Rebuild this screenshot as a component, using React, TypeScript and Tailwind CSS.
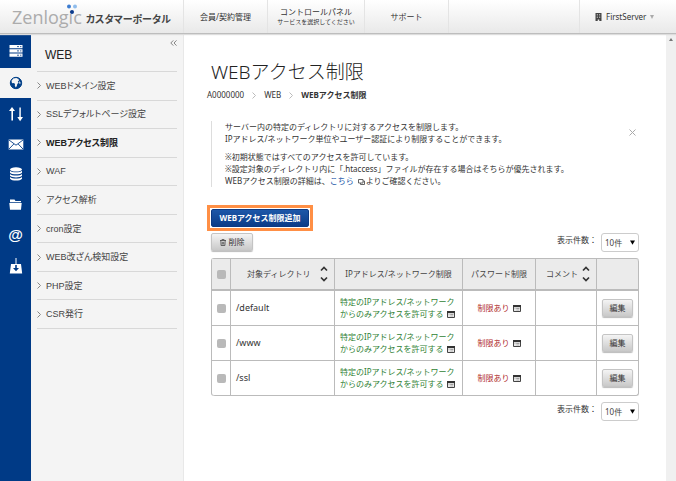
import React from "react";

const menu = [
  "WEBドメイン設定",
  "SSLデフォルトページ設定",
  "WEBアクセス制限",
  "WAF",
  "アクセス解析",
  "cron設定",
  "WEB改ざん検知設定",
  "PHP設定",
  "CSR発行",
];

const rows = ["/default", "/www", "/ssl"];

function Logo() {
  return (
    <span className="relative font-['Open_Sans','Noto_Sans',sans-serif] text-[18px] leading-6 text-[#acacac]">
      Zenlogic
      <svg className="absolute -top-px right-1 h-4 w-3" viewBox="0 0 12 16" aria-hidden="true">
        <circle cx="3" cy="2.5" r="2" fill="#3c7cd0" />
        <circle cx="9" cy="2.5" r="2" fill="#8fbcec" />
        <circle cx="6" cy="8" r="2" fill="#0a3a8c" />
      </svg>
    </span>
  );
}

function ServerIcon() {
  return (
    <svg width="14" height="12" viewBox="0 0 14 12" aria-hidden="true">
      <path fill="#fff" d="M.5 0h13v3.2H.5zM.5 4.3h13v3.2H.5zM.5 8.6h13v3.2H.5z" />
      <path stroke="#003a86" strokeWidth=".8" d="M8 1.6h2M11 1.6h1.4M8 5.9h2M11 5.9h1.4M8 10.2h2M11 10.2h1.4" />
    </svg>
  );
}

function GlobeIcon() {
  return (
    <svg width="14" height="14" viewBox="0 0 14 14" aria-hidden="true">
      <circle cx="7" cy="7" r="5.7" fill="#003f88" stroke="#003f88" strokeWidth="1" />
      <path fill="#f4f4f4" d="M2.500 4.800l1.800-2.200 3-.6 2.200.9.500 1.600-1.200 1 .8 1.200-1.300 1.200-.5 2.200-1 1.400-1-1.800.2-1.900-1.700-.9-1.300.3zM10.300 5l1.200 1.500-.3 1.700-1-.9z" />
    </svg>
  );
}

function ArrowsIcon() {
  return (
    <svg width="16" height="16" viewBox="0 0 16 16" aria-hidden="true">
      <path fill="#fff" d="M4 1L7 5H5v9.5H3.4V5H1zM11.4 1.5H12.8V11H15l-2.9 4.2L9.3 11h2z" />
    </svg>
  );
}

function MailIcon() {
  return (
    <svg width="16" height="11" viewBox="0 0 16 11" aria-hidden="true">
      <path fill="#fff" d="M.7.5h14.6v10H.7z" />
      <path fill="none" stroke="#003a86" strokeWidth=".9" d="M1 1l7 5.2L15 1M1 10l4.8-5M15 10l-4.8-5" />
    </svg>
  );
}

function DatabaseIcon() {
  return (
    <svg width="14" height="14" viewBox="0 0 14 14" aria-hidden="true">
      <ellipse cx="7" cy="2.4" rx="6" ry="2.1" fill="#fff" />
      <path fill="#fff" d="M1 3.8c2 2 10 2 12 0v1.9c-1.8 2.2-10.200 2.200-12 0zM1 6.900c2 2 10 2 12 0v1.900c-1.800 2.200-10.200 2.200-12 0zM1 10c2 2 10 2 12 0v1.700c-1.800 2.500-10.200 2.500-12 0z" />
    </svg>
  );
}

function FolderIcon() {
  return (
    <svg width="13" height="11" viewBox="0 0 13 11" aria-hidden="true">
      <path fill="#fff" d="M1 .6h4.500l1 1.400H12v1.200H1zM.3 4h12.400l-.7 6.700H1z" />
    </svg>
  );
}

function AtIcon() {
  return <span className="font-['Liberation_Sans',sans-serif] text-[15px] leading-4 font-bold text-white">@</span>;
}

function DownloadIcon() {
  return (
    <svg width="14" height="16" viewBox="0 0 14 16" aria-hidden="true">
      <path fill="#fff" d="M6.500 0h1v6H12l1.200 9.500H.8L2 6h4.500z" />
      <path fill="#003a86" d="M6.200 7h1.600v3h2.200L7 13.300 4 10h2.200z" />
    </svg>
  );
}

const rail = [
  { label: "WEB", icon: <GlobeIcon /> },
  { label: "転送", icon: <ArrowsIcon /> },
  { label: "メール", icon: <MailIcon /> },
  { label: "データベース", icon: <DatabaseIcon /> },
  { label: "ファイル", icon: <FolderIcon /> },
  { label: "ドメイン", icon: <AtIcon /> },
  { label: "インストール", icon: <DownloadIcon /> },
];

function Chevron({ className }: { className: string }) {
  return (
    <svg className={className} width="4" height="7" viewBox="0 0 4 7" aria-hidden="true">
      <path fill="none" stroke="currentColor" d="M.5.5l3 3-3 3" />
    </svg>
  );
}

function SortIcon() {
  return (
    <svg width="8" height="16" viewBox="0 0 8 16" aria-hidden="true">
      <path fill="none" stroke="#333" strokeWidth="1.700" d="M1 4.500l3-3 3 3M1 11.500l3 3 3-3" />
    </svg>
  );
}

function WindowIcon() {
  return (
    <svg className="ml-[3px] inline-block align-[-1px]" width="8" height="7" viewBox="0 0 8 7" aria-hidden="true">
      <path fill="#fff" stroke="#444" d="M.5.5h7v6h-7z" />
      <path fill="#333" d="M0 0h8v2.200H0z" />
      <path stroke="#777" strokeWidth=".7" d="M1.500 3.500h1M3.200 3.500h3.300M1.500 5h1M3.200 5h3.300" />
    </svg>
  );
}

function Check({ label }: { label: string }) {
  return (
    <input
      type="checkbox"
      aria-label={label}
      className="mx-auto block size-[9px] appearance-none rounded-xs bg-[#b9b9b9] checked:bg-[#666]"
    />
  );
}

function PageSize({ id }: { id: string }) {
  return (
    <div className="flex items-start gap-1">
      <label htmlFor={id} className="pt-px">
        表示件数：
      </label>
      <div className="relative">
        <select
          id={id}
          className="block h-[19px] w-[38px] appearance-none rounded-[3px] border border-[#ccc] bg-white pl-[3px] text-[8px] leading-3 text-[#444]"
        >
          <option>10件</option>
          <option>50件</option>
        </select>
        <svg className="pointer-events-none absolute top-[7px] right-1" width="5" height="5" viewBox="0 0 5 5" aria-hidden="true">
          <path d="M0 .5h5L2.500 4.800z" />
        </svg>
      </div>
    </div>
  );
}

const grayButton =
  "rounded-xs border border-[#c4c4c4] bg-linear-to-b from-[#f4f4f4] to-[#c9c9c9] text-[#333] shadow-[0_1px_1px_#bbb]";
const cell = "border-r border-b border-[#bbb]";

export default function App() {
  return (
    <div className="flex min-h-screen flex-col bg-white font-['Noto_Sans','Noto_Sans_CJK_JP',sans-serif] text-[8px] leading-3 text-[#333]">
      <header className="z-10 flex h-[34px] border-b border-[#bdbdbd] bg-linear-to-b from-white to-[#e9e9e9] shadow-[0_1px_1px_#ddd]">
        <div className="flex w-[184px] shrink-0 items-center gap-1 border-r border-[#e4e4e4] pl-3">
          <Logo />
          <span className="pt-1 font-['Noto_Sans_CJK_JP',sans-serif] text-[10px] leading-4 font-bold whitespace-nowrap text-[#444] [font-feature-settings:'palt']">
            カスタマーポータル
          </span>
        </div>
        <nav className="flex shrink-0 text-center">
          <a href="#contract" className="flex w-[84px] items-center justify-center border-r border-[#e4e4e4]">
            会員/契約管理
          </a>
          <a href="#panel" className="flex w-[97px] flex-col justify-center border-r border-[#e4e4e4]">
            コントロールパネル
            <small className="text-[6px] leading-[9px]">サービスを選択してください</small>
          </a>
          <a href="#support" className="flex w-[84px] items-center justify-center border-r border-[#e4e4e4]">
            サポート
          </a>
        </nav>
        <button type="button" className="ml-auto flex w-[97px] items-center gap-1 border-l border-[#e4e4e4] pl-[15px]">
          <svg width="7" height="8" viewBox="0 0 7 8" aria-hidden="true">
            <path fill="#444" d="M.5 0h6v8H4.300V6.500H2.700V8H.5z" />
            <path stroke="#ddd" strokeWidth=".8" d="M1.800 1.500h1M4.200 1.500h1M1.800 3h1M4.200 3h1M1.800 4.500h1M4.200 4.500h1" />
          </svg>
          FirstServer
          <svg width="4" height="4" viewBox="0 0 4 4" aria-hidden="true">
            <path fill="#aaa" d="M0 0h4L2 4z" />
          </svg>
        </button>
      </header>

      <div className="flex grow">
        <nav className="w-[31px] shrink-0 bg-[#003a86]">
          <a href="#server" aria-label="サーバー" className="flex h-[34px] items-center justify-center">
            <ServerIcon />
          </a>
          <div className="grid h-[213px] auto-rows-fr">
            {rail.map((item, i) => (
              <a
                key={item.label}
                href={"#rail" + i}
                aria-label={item.label}
                className={i === 0 ? "flex items-center justify-center bg-[#f4f4f4]" : "flex items-center justify-center"}
              >
                {item.icon}
              </a>
            ))}
          </div>
        </nav>

        <aside className="w-[153px] shrink-0 border-r border-[#e8e8e8] bg-[#f4f4f4] px-[6px] font-['Liberation_Sans','Noto_Sans_CJK_JP',sans-serif] text-[9px] [font-feature-settings:'palt']">
          <div className="flex h-[38px] items-center justify-between border-b border-[#d8d8d8] pl-2">
            <h2 className="pt-1 text-[12px] leading-4 text-[#222]">WEB</h2>
            <button type="button" aria-label="メニューを閉じる" className="self-start pt-[6px]">
              <svg width="7" height="6" viewBox="0 0 7 6" aria-hidden="true">
                <path fill="none" stroke="#777" strokeWidth=".9" d="M3.300.4L.8 3l2.500 2.600M6.500.4L4 3l2.500 2.600" />
              </svg>
            </button>
          </div>
          <ul className="grid h-[257px] auto-rows-fr">
            {menu.map((item, i) => (
              <li key={item} className="border-b border-[#d8d8d8]">
                <a
                  href={"#menu" + i}
                  className={
                    i === 2
                      ? "flex h-full items-center gap-[5px] font-bold text-[#222]"
                      : "flex h-full items-center gap-[5px] text-[#444]"
                  }
                >
                  <Chevron className="text-[#888]" />
                  {item}
                </a>
              </li>
            ))}
          </ul>
        </aside>

        <main className="min-w-0 grow pt-[26px] pr-[27px] pl-[27px]">
          <h1 className="text-[19px] leading-6 font-light text-[#222]">WEBアクセス制限</h1>
          <ol className="mt-[5px] -ml-1 flex items-center gap-2">
            <li>A0000000</li>
            <Chevron className="text-[#bbb]" />
            <li>WEB</li>
            <Chevron className="text-[#bbb]" />
            <li className="font-bold">WEBアクセス制限</li>
          </ol>

          <section className="mt-5 flex justify-between border-l border-[#ddd] pl-[13px]">
            <div className="flex flex-col gap-[6px]">
              <p>
                サーバー内の特定のディレクトリに対するアクセスを制限します。
                <br />
                IPアドレス/ネットワーク単位やユーザー認証により制限することができます。
              </p>
              <p>
                ※初期状態ではすべてのアクセスを許可しています。
                <br />
                ※設定対象のディレクトリ内に「.htaccess」ファイルが存在する場合はそちらが優先されます。
                <br />
                WEBアクセス制限の詳細は、
                <a href="#detail" className="text-[#1a56a8]">
                  こちら
                  <svg className="mx-px ml-1 inline-block align-[-1px]" width="7" height="6" viewBox="0 0 7 6" aria-hidden="true">
                    <path fill="none" stroke="#555" strokeWidth=".9" d="M.5.5h4.500v3.500H.5zM2.500 4v1.500h4V2H5" />
                  </svg>
                </a>
                よりご確認ください。
              </p>
            </div>
            <button type="button" aria-label="閉じる" className="mt-2 mr-[3px] self-start">
              <svg width="7" height="7" viewBox="0 0 7 7" aria-hidden="true">
                <path stroke="#aaa" d="M.5.5l6 6M6.500.5l-6 6" />
              </svg>
            </button>
          </section>

          <div className="mt-[18px] -ml-1 flex w-[106px] border-[3px] border-[#ff8f45] p-px">
            <button
              type="button"
              className="h-[18px] grow rounded-xs border border-[#0c3a84] bg-linear-to-b from-[#1d57a8] to-[#0b3c88] font-bold whitespace-nowrap text-white"
            >
              WEBアクセス制限追加
            </button>
          </div>

          <div className="mt-[2px] flex items-start justify-between">
            <button type="button" className={grayButton + " flex h-[18px] w-[42px] items-center justify-center gap-[3px]"}>
              <svg width="6" height="7" viewBox="0 0 6 7" aria-hidden="true">
                <path fill="none" stroke="#444" strokeWidth=".8" d="M0 1.500h6M2 1.400V.4h2v1M.8 1.500l.3 5h3.800l.3-5M2.300 2.800v2.700M3.700 2.800v2.700" />
              </svg>
              削除
            </button>
            <PageSize id="size-top" />
          </div>

          <table className="mt-[6px] w-full table-fixed border-separate border-spacing-0 rounded-[3px] border-t border-l border-[#bbb]">
            <colgroup>
              <col className="w-[19px]" />
              <col className="w-[104px]" />
              <col className="w-[128px]" />
              <col className="w-[73px]" />
              <col className="w-[61px]" />
              <col />
            </colgroup>
            <thead>
              <tr className="h-[32px] bg-[#ebebeb] text-[#444] *:border-r *:border-b-2 *:border-[#bbb] *:p-0 *:font-normal">
                <th>
                  <Check label="すべて選択" />
                </th>
                <th>
                  <div className="flex items-center justify-between pr-[6px] pl-4">
                    対象ディレクトリ
                    <SortIcon />
                  </div>
                </th>
                <th>IPアドレス/ネットワーク制限</th>
                <th>パスワード制限</th>
                <th>
                  <div className="flex items-center justify-between pr-[6px] pl-[10px]">
                    コメント
                    <SortIcon />
                  </div>
                </th>
                <th className="rounded-tr-[3px]" aria-label="操作" />
              </tr>
            </thead>
            <tbody>
              {rows.map((dir) => (
                <tr key={dir} className="h-[35px] last:*:first:rounded-bl-[3px] last:*:last:rounded-br-[3px]">
                  <td className={cell}>
                    <Check label={dir} />
                  </td>
                  <td className={cell + " pl-[5px] text-[9px]"}>{dir}</td>
                  <td className={cell + " pl-[5px] text-[#2f7f35]"}>
                    特定のIPアドレス/ネットワーク
                    <br />
                    からのみアクセスを許可する
                    <WindowIcon />
                  </td>
                  <td className={cell + " text-center text-[#b02c2c]"}>
                    制限あり
                    <WindowIcon />
                  </td>
                  <td className={cell} />
                  <td className={cell}>
                    <button type="button" className={grayButton + " mx-auto block h-[18px] w-[31px]"}>
                      編集
                    </button>
                  </td>
                </tr>
              ))}
            </tbody>
          </table>

          <div className="mt-[6px] flex justify-end">
            <PageSize id="size-bottom" />
          </div>
        </main>

        <div className="flex w-[10px] shrink-0 justify-center bg-[#f0f0f0] pt-1">
          <svg width="4" height="3" viewBox="0 0 4 3" aria-hidden="true">
            <path fill="#777" d="M2 0l2 3H0z" />
          </svg>
        </div>
      </div>
    </div>
  );
}
